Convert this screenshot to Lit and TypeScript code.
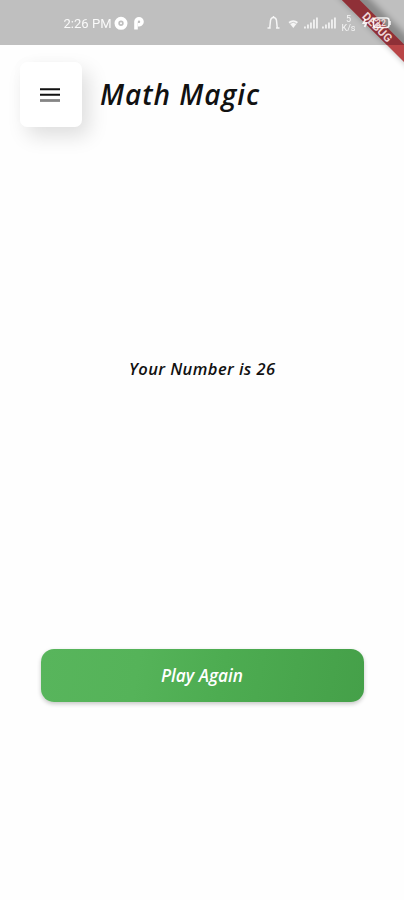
import { LitElement, html, css, svg } from "lit";
import { customElement } from "lit/decorators.js";

@customElement("status-bar")
class StatusBar extends LitElement {
  static styles = css`
    :host { display: block; height: 45px; background: #bfbfbf; font-style: normal; }
    svg { display: block; }
    text { font-family: Roboto, sans-serif; fill: #fff; }
  `;
  render() {
    const bars = (x: number) =>
      [2, 4, 6, 9, 11].map((h, i) => svg`<rect x=${x + i * 3} y=${28.5 - h} width="1.9" height=${h} fill="#fff" opacity=".75"/>`);
    return html`
      <svg width="404" height="45" viewBox="0 0 404 45">
        <text x="63.5" y="28" font-size="13" textLength="48" opacity=".92">2:26 PM</text>
        <circle cx="121" cy="23.3" r="4.6" fill="none" stroke="#fff" stroke-width="3.8"/>
        <circle cx="121" cy="23.3" r="1" fill="#fff"/>
        <path d="M136 29.5V21.600a3 3 0 1 1 3.300 3.100H138" fill="none" stroke="#fff" stroke-width="3.6"/>
        <path d="M267.500 28h3.200M276 28h3.500M269.800 27.500L270.500 20.500q.500-3 3-3t3 3L277.200 27.500M273.500 17.500V16" fill="none" stroke="#fff" stroke-width="1.5" opacity=".85"/>
        <path d="M288.500 22a7 7 0 0 1 9.500 0L293.300 28z" fill="#fff" opacity=".85"/>
        <path d="M290 23.500q3.300-2.400 6.500 0" fill="none" stroke="#bfbfbf" stroke-width=".8"/>
        ${bars(304)}${bars(322)}
        <text x="346" y="22" font-size="9" opacity=".85">5</text>
        <text x="341.500" y="31" font-size="9" textLength="14" opacity=".85">K/s</text>
      </svg>`;
  }
}

@customElement("debug-ribbon")
class DebugRibbon extends LitElement {
  static styles = css`
    :host { display: block; width: 84px; height: 84px; overflow: hidden; pointer-events: none; font-style: normal; }
    svg { display: block; }
    .shade { filter: blur(3px); }
    text { font-family: Roboto, sans-serif; font-weight: 700; fill: #f0d5d5; }
  `;
  render() {
    return html`
      <svg width="84" height="84" viewBox="320 0 84 84">
        <path class="shade" d="M336-6h29l50 50v29z" fill="#000" opacity=".28"/>
        <path d="M342 0h17.500L404 44.500V62z" fill="#b94547"/>
        <path d="M342 0h17.500L404 44.500V45H387z" fill="#8f3037"/>
        <text transform="translate(374.500 30) rotate(45)" x="0" y="0" font-size="11.500" text-anchor="middle" textLength="37">DEBUG</text>
        <g fill="none" stroke="#fff" opacity=".9">
          <rect x="373.500" y="18" width="15.500" height="9.500" rx="2.500" stroke-width="1.600"/>
          <path d="M390 21v4" stroke-width="1.600"/>
          <path d="M365.500 19l-2 4h3l-2 4" stroke-width="1.800"/>
        </g>
        <text x="376" y="26" font-size="8.500" textLength="10">22</text>
      </svg>`;
  }
}

@customElement("app-root")
class AppRoot extends LitElement {
  static styles = css`
    :host {
      display: flex; flex-direction: column; position: relative;
      width: 404px; height: 900px; overflow: hidden; background: #fefefe;
      color: #111; font-family: "Open Sans", "Noto Sans", sans-serif; font-style: italic;
    }
    debug-ribbon { position: absolute; top: 0; right: 0; }
    header { display: flex; align-items: center; gap: 18px; padding: 17px 20px 0; height: 65px; }
    .menu {
      flex: none; display: grid; place-items: center; width: 62px; height: 65px; padding: 0 2px 0 0;
      border: 0; border-radius: 7px; background: #fff; box-sizing: border-box;
      box-shadow: 7px 9px 20px rgba(0, 0, 0, .13), -3px -3px 12px rgba(0, 0, 0, .012);
    }
    .label { display: block; overflow: visible; }
    .title { font-size: 28px; font-weight: 600; }
    .result { font-size: 16.5px; font-weight: 600; }
    .action { font-size: 17.500px; font-weight: 600; fill: #fff; }
    main { flex: 1; display: flex; flex-direction: column; align-items: center; }
    .answer { margin: 226px 0 0; height: 32px; }
    .play {
      margin: 264px 0 0 1px; width: 323px; height: 53px; padding: 0 1px 0 0; border: 0; border-radius: 13px;
      box-sizing: border-box; display: grid; place-items: center; font-family: inherit; font-style: inherit;
      background: linear-gradient(100deg, #58b55c 0%, #55b359 30%, #4dac51 56%, #45a049 100%);
      box-shadow: 0 2px 4px rgba(0, 0, 0, .22);
    }
  `;
  render() {
    return html`
      <status-bar></status-bar>
      <header>
        <button class="menu" aria-label="Menu">
          <svg width="22" height="16" viewBox="0 0 22 16">
            <path d="M1 2.300h20M1 7.700h20" stroke="#111" stroke-width="2"/>
            <path d="M1 13.500h20" stroke="#858585" stroke-width="2.800"/>
          </svg>
        </button>
        <svg class="label" width="160" height="44">
          <text class="title" x="0" y="32" fill="#111" textLength="159">Math Magic</text>
        </svg>
      </header>
      <main>
        <div class="answer">
          <svg class="label" width="146" height="32">
            <text class="result" x="0" y="22" fill="#111" textLength="146">Your Number is 26</text>
          </svg>
        </div>
        <button class="play">
          <svg class="label" width="82" height="32">
            <text class="action" x="0" y="22" textLength="82" lengthAdjust="spacingAndGlyphs">Play Again</text>
          </svg>
        </button>
      </main>
      <debug-ribbon></debug-ribbon>`;
  }
}
